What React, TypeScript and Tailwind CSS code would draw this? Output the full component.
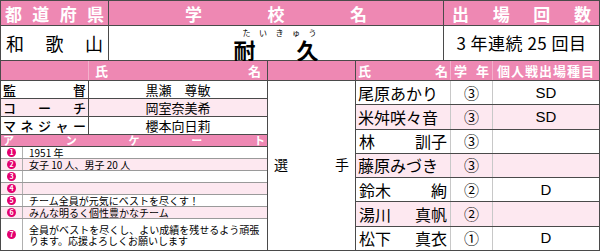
import React from 'react';

const font = { fontFamily: '"Noto Sans CJK JP", "Noto Sans", sans-serif' };

const staff = [
    { role: ['監', '督'], name: '黒瀬　尊敏', pink: false },
    { role: ['コ', 'ー', 'チ'], name: '岡室奈美希', pink: true },
    { role: ['マ', 'ネ', 'ジ', 'ャ', 'ー'], name: '櫻本向日莉', pink: false },
];

const survey = [
    { n: '1', text: '1951 年' },
    { n: '2', text: '女子 10 人、男子 20 人' },
    { n: '3', text: '' },
    { n: '4', text: '' },
    { n: '5', text: 'チーム全員が元気にベストを尽くす！' },
    { n: '6', text: 'みんな明るく個性豊かなチーム' },
    { n: '7', text: '全員がベストを尽くし、よい成績を残せるよう頑張ります。応援よろしくお願いします' },
];

const players = [
    { name: ['尾原あかり'], grade: '③', event: 'SD' },
    { name: ['米舛咲々音'], grade: '③', event: 'SD' },
    { name: ['林', '訓子'], grade: '③', event: '' },
    { name: ['藤原みづき'], grade: '③', event: '' },
    { name: ['鈴木', '絢'], grade: '②', event: 'D' },
    { name: ['湯川', '真帆'], grade: '②', event: '' },
    { name: ['松下', '真衣'], grade: '①', event: 'D' },
];

const Spread = ({ chars, className }: { chars: string[]; className: string }) => (
    <div className={`flex justify-between ${className}`}>
        {chars.map((c, i) => <span key={i}>{c}</span>)}
    </div>
);

export default function App() {
    return (
        <div style={font} className="w-[600px] h-[252px] bg-white text-black overflow-hidden">
            <div className="w-[600px] h-[251px] border border-[#4a4a4a] flex flex-col">

                {/* Top header */}
                <div className="flex h-[25px] bg-[#ee88b3] text-white font-bold text-[17px] leading-[25px] border-b border-[#4a4a4a]">
                    <Spread chars={['都', '道', '府', '県']} className="w-[108px] px-[4px] border-r border-[#4a4a4a]" />
                    <Spread chars={['学', '校', '名']} className="w-[335px] px-[76px] border-r border-[#4a4a4a]" />
                    <Spread chars={['出', '場', '回', '数']} className="flex-1 px-[8px]" />
                </div>

                {/* Prefecture / school / appearances */}
                <div className="flex h-[35px] border-b border-[#4a4a4a]">
                    <Spread chars={['和', '歌', '山']} className="w-[108px] px-[5px] items-center text-[18px] border-r border-[#4a4a4a]" />
                    <div className="w-[335px] border-r border-[#4a4a4a] flex justify-center">
                        <div className="flex flex-col w-[85px]">
                            <div className="h-[9px] mt-[3px] w-[85px] whitespace-nowrap text-[8px] leading-[8px] tracking-[8.5px] pl-[9px]">たいきゅう</div>
                            <div className="flex gap-[41px] text-[22px] leading-[22px] font-bold mt-[1px]">
                                <span>耐</span>
                                <span>久</span>
                            </div>
                        </div>
                    </div>
                    <div className="flex-1 flex items-center justify-center text-[17px] tracking-[0.5px]">3 年連続 25 回目</div>
                </div>

                {/* Lower block */}
                <div className="flex flex-1 min-h-0">
                    {/* Staff + survey */}
                    <div className="w-[267px] flex flex-col border-r border-[#4a4a4a]">
                        <div className="flex h-[20px] bg-[#ee88b3] text-white font-bold text-[13px] leading-[20px] border-b border-[#4a4a4a]">
                            <div className="w-[88px] border-r border-[#f4b0cc]" />
                            <Spread chars={['氏', '名']} className="flex-1 px-[6px]" />
                        </div>
                        {staff.map((s, i) => (
                            <div key={i} className={`flex h-[18px] text-[13px] leading-[17px] border-b border-[#4a4a4a] ${s.pink ? 'bg-[#fde8f0]' : 'bg-white'}`}>
                                <Spread chars={s.role} className="w-[88px] px-[2px] border-r border-[#4a4a4a] font-medium" />
                                <div className="flex-1 text-center">{s.name}</div>
                            </div>
                        ))}
                        <Spread chars={['ア', 'ン', 'ケ', 'ー', 'ト']} className="h-[12px] bg-[#ee88b3] text-white font-bold text-[11px] leading-[11px] px-[2px] border-b border-[#4a4a4a]" />
                        {survey.map((q, i) => (
                            <div key={i} className={`flex ${i === 6 ? 'flex-1 min-h-0' : 'h-[12px]'} ${i < 6 ? 'border-b border-[#9a9a9a]' : ''} ${i % 2 === 1 ? 'bg-[#fde8f0]' : 'bg-white'}`}>
                                <div className="w-[22px] flex items-center justify-center border-r border-[#b0b0b0]">
                                    <span className="w-[9px] h-[9px] rounded-full bg-[#e4006f] text-white text-[7px] leading-[9px] font-bold text-center">{q.n}</span>
                                </div>
                                <div className="flex-1 pl-[6px] pr-[2px] text-[10px] leading-[11px] flex items-center">{q.text}</div>
                            </div>
                        ))}
                    </div>

                    {/* 選手 cell */}
                    <div className="w-[88px] flex flex-col border-r border-[#4a4a4a]">
                        <div className="h-[20px] bg-[#ee88b3] border-b border-[#4a4a4a]" />
                        <Spread chars={['選', '手']} className="flex-1 items-center px-[6px] text-[14px] pb-[2px]" />
                    </div>

                    {/* Players */}
                    <div className="flex-1 flex flex-col min-h-0">
                        <div className="flex h-[20px] bg-[#ee88b3] text-white font-bold text-[13px] leading-[20px] border-b border-[#4a4a4a]">
                            <Spread chars={['氏', '名']} className="w-[95px] px-[2px] border-r border-[#f4b0cc]" />
                            <Spread chars={['学', '年']} className="w-[42px] px-[3px] border-r border-[#f4b0cc]" />
                            <div className="flex-1 text-center tracking-[1px]">個人戦出場種目</div>
                        </div>
                        {players.map((p, i) => (
                            <div key={i} className={`flex flex-1 min-h-0 items-stretch text-[16px] leading-[18px] ${i < 6 ? 'border-b border-[#4a4a4a]' : ''} ${i % 2 === 1 ? 'bg-[#fde8f0]' : 'bg-white'}`}>
                                {p.name.length > 1
                                    ? <Spread chars={p.name} className="w-[95px] px-[3px] items-center border-r border-[#c8c8c8]" />
                                    : <div className="w-[95px] px-[2px] flex items-center border-r border-[#c8c8c8] whitespace-nowrap">{p.name[0]}</div>}
                                <div className="w-[42px] flex items-center justify-center border-r border-[#c8c8c8] text-[15px]">{p.grade}</div>
                                <div className="flex-1 flex items-center justify-center text-[15px]" style={{ fontFamily: '"Liberation Sans", sans-serif' }}>{p.event}</div>
                            </div>
                        ))}
                    </div>
                </div>
            </div>
        </div>
    );
}
